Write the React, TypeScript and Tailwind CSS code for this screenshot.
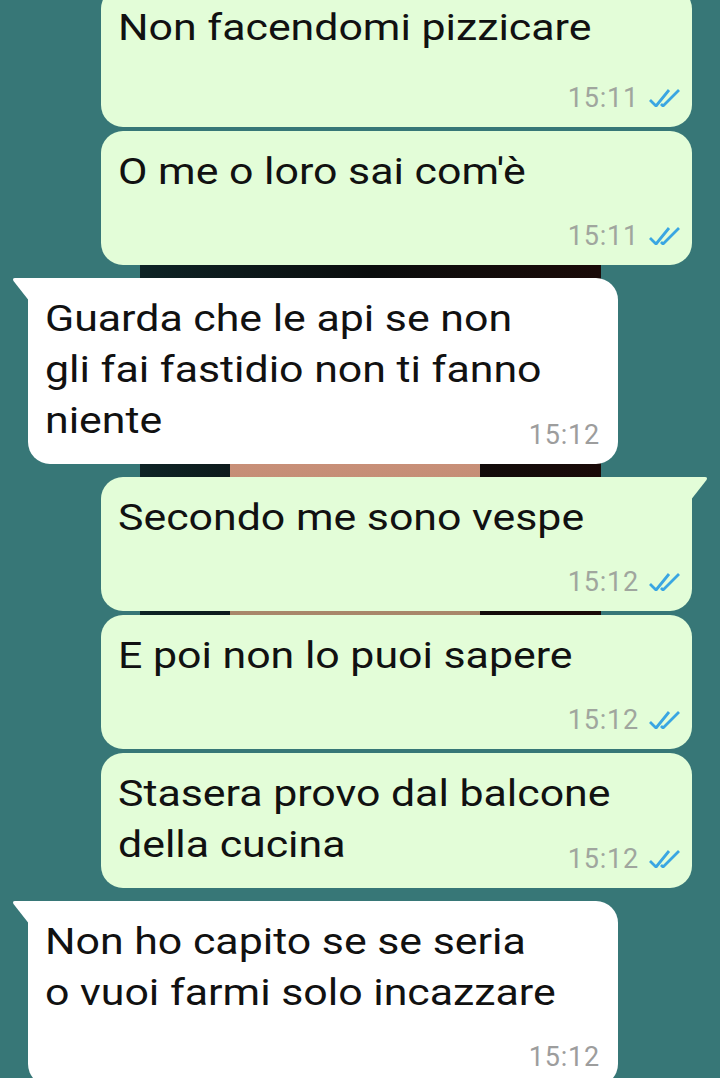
import React from "react";

type Msg = {
  side: "in" | "out";
  lines: string[];
  time: string;
  tail?: boolean;
  inline?: boolean;
  gap: string;
  timeGap?: string;
};

const messages: Msg[] = [
  { side: "out", lines: ["Non facendomi pizzicare"], time: "15:11", gap: "-mt-[13px]", timeGap: "mt-[32px]" },
  { side: "out", lines: ["O me o loro sai com'è"], time: "15:11", gap: "mt-[4px]" },
  {
    side: "in",
    lines: ["Guarda che le api se non", "gli fai fastidio non ti fanno", "niente"],
    time: "15:12",
    tail: true,
    inline: true,
    gap: "mt-[13px]",
  },
  { side: "out", lines: ["Secondo me sono vespe"], time: "15:12", tail: true, gap: "mt-[13px]" },
  { side: "out", lines: ["E poi non lo puoi sapere"], time: "15:12", gap: "mt-[4px]" },
  {
    side: "out",
    lines: ["Stasera provo dal balcone", "della cucina"],
    time: "15:12",
    inline: true,
    gap: "mt-[4px]",
  },
  {
    side: "in",
    lines: ["Non ho capito se se seria", "o vuoi farmi solo incazzare"],
    time: "15:12",
    tail: true,
    gap: "mt-[13px]",
  },
];

function Ticks() {
  return (
    <svg width="31" height="18" viewBox="0 0 31 18" fill="none" className="ml-[10px] mb-[3px]">
      <path d="M1 11 L7 17 L20 1" stroke="#3aa6e2" strokeWidth="2.8" strokeLinejoin="round" />
      <path d="M12 15 L14 17 L30 1" stroke="#3aa6e2" strokeWidth="2.8" strokeLinejoin="round" />
    </svg>
  );
}

function Time({ msg }: { msg: Msg }) {
  const out = msg.side === "out";
  return (
    <div className="flex items-end h-[24px] leading-[24px]">
      <span className={`text-[27px] tracking-[0.8px] ${out ? "text-[#a0a69e]" : "text-[#9d9d9d]"}`}>
        {msg.time}
      </span>
      {out && <Ticks />}
    </div>
  );
}

function Line({ text }: { text: string }) {
  return <span className="inline-block origin-left scale-x-[1.19] whitespace-nowrap">{text}</span>;
}

function Bubble({ msg }: { msg: Msg }) {
  const out = msg.side === "out";
  const last = msg.lines.length - 1;
  const corners = msg.tail
    ? out
      ? "rounded-[22px] rounded-tr-none"
      : "rounded-[22px] rounded-tl-none"
    : "rounded-[22px]";
  return (
    <div
      className={`relative ${msg.gap} ${corners} ${
        out ? "self-end mr-[28px] w-[591px] bg-[#e3fdd8] pr-[12px]" : "ml-[28px] w-[590px] bg-white pr-[18px]"
      } pl-[17px] pt-[16px] pb-[17px] text-[36px] leading-[51px] text-[#111]`}
    >
      {msg.tail && out && (
        <svg width="18" height="24" viewBox="0 0 18 24" className="absolute top-0 -right-[16px]">
          <path d="M0 0 L15 0 Q18 0 16.5 3 L0 24 Z" fill="#e3fdd8" />
        </svg>
      )}
      {msg.tail && !out && (
        <svg width="18" height="24" viewBox="0 0 18 24" className="absolute top-0 -left-[16px]">
          <path d="M18 0 L3 0 Q0 0 1.5 3 L18 24 Z" fill="#ffffff" />
        </svg>
      )}
      {msg.lines.map((l, i) =>
        i === last && msg.inline ? (
          <div key={i} className="flex justify-between items-end">
            <Line text={l} />
            <Time msg={msg} />
          </div>
        ) : (
          <div key={i}>
            <Line text={l} />
          </div>
        )
      )}
      {!msg.inline && (
        <div className={`flex justify-end ${msg.timeGap ?? "mt-[26px]"}`}>
          <Time msg={msg} />
        </div>
      )}
    </div>
  );
}

export default function App() {
  return (
    <div
      className="relative w-[720px] h-[1078px] overflow-hidden bg-[#377777]"
      style={{ fontFamily: "Roboto, 'Liberation Sans', sans-serif" }}
    >
      {/* wallpaper photo peeking between bubbles */}
      <div className="absolute left-[140px] top-[260px] w-[461px] h-[356px] bg-gradient-to-r from-[#0e2426] via-[#0a0d0d] to-[#1a0a08]" />
      <div className="absolute left-[230px] top-[463px] w-[250px] h-[153px] bg-gradient-to-b from-[#c88f78] to-[#a8876a]" />
      <div className="relative flex flex-col">
        {messages.map((m, i) => (
          <Bubble key={i} msg={m} />
        ))}
      </div>
    </div>
  );
}
